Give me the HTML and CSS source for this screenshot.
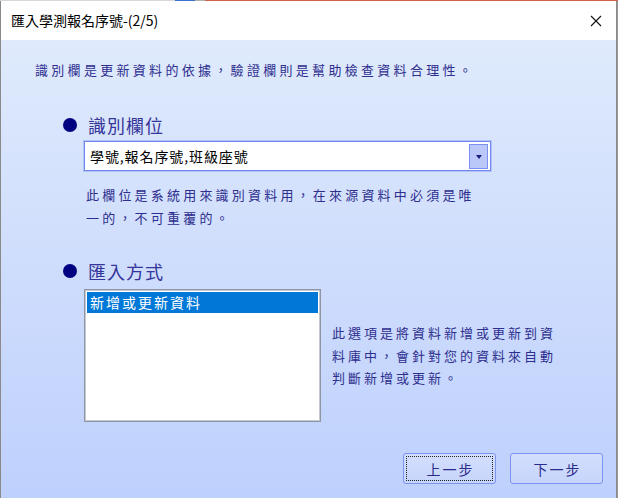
FILE: index.html
```html
<!DOCTYPE html>
<html lang="zh-Hant">
<head>
    <meta charset="UTF-8">
    <title>匯入學測報名序號-(2/5)</title>
    <link rel="stylesheet" href="styles.css">
</head>
<body>
    <div class="behind"></div>
    <div class="window">
        <div class="titlebar">
            <span class="title">匯入學測報名序號-(2/5)</span>
            <svg class="close" width="12" height="12" viewBox="0 0 12 12">
                <path d="M1 1 L11 11 M11 1 L1 11" stroke="#111" stroke-width="1.1" fill="none"/>
            </svg>
        </div>

        <div class="client">
            <p class="intro">識別欄是更新資料的依據，驗證欄則是幫助檢查資料合理性。</p>

            <div class="section">
                <h3 class="heading"><span class="dot"></span>識別欄位</h3>
                <div class="combo">
                    <span class="combo-text">學號,報名序號,班級座號</span>
                    <span class="combo-btn"><span class="arrow"></span></span>
                </div>
                <p class="desc">此欄位是系統用來識別資料用，在來源資料中必須是唯<br>一的，不可重覆的。</p>
            </div>

            <div class="section second">
                <h3 class="heading"><span class="dot"></span>匯入方式</h3>
                <div class="mode-row">
                    <div class="listbox">
                        <div class="list-item selected">新增或更新資料</div>
                    </div>
                    <p class="side-desc">此選項是將資料新增或更新到資<br>料庫中，會針對您的資料來自動<br>判斷新增或更新。</p>
                </div>
            </div>

            <div class="buttons">
                <button class="btn focused"><span>上一步</span></button>
                <button class="btn"><span>下一步</span></button>
            </div>
        </div>
    </div>
</body>
</html>
```

FILE: styles.css
```css
body {
    margin: 0;
    width: 618px;
    height: 498px;
    overflow: hidden;
    background: #9a9a9a;
    font-family: "Noto Sans CJK TC", "Noto Sans", sans-serif;
}
.behind {
    height: 1px;
    background: linear-gradient(to right, #d8d8d8 0, #d8d8d8 175px, #3c6fd0 175px, #3c6fd0 195px, #b0b0b0 195px, #b0b0b0 205px, #d0644a 205px);
}
.window {
    width: 615px;
    height: 497px;
    border-left: 1px solid #8a8a8a;
    border-right: 1px solid #8a8a8a;
    display: flex;
    flex-direction: column;
}
.titlebar {
    height: 39px;
    background: #ffffff;
    display: flex;
    align-items: center;
    justify-content: space-between;
    padding: 0 14px 0 10px;
    flex-shrink: 0;
}
.title {
    font-size: 14px;
    color: #000;
    margin-top: -1px;
}
.close {
    margin-top: 1px;
}
.client {
    flex: 1;
    background: linear-gradient(to bottom, #dfeafc 0%, #bed0fd 100%);
    padding: 20px 13px 0 34px;
    color: #2e2e8e;
}
.intro {
    margin: 0;
    font-size: 13px;
    line-height: 20px;
    letter-spacing: 3.3px;
}
.section {
    margin-top: 33px;
}
.section.second {
    margin-top: 30px;
}
.heading {
    margin: 0 0 0 28px;
    font-size: 18px;
    font-weight: normal;
    line-height: 24px;
    letter-spacing: 1px;
    display: flex;
    align-items: center;
    color: #34349a;
}
.dot {
    width: 14px;
    height: 14px;
    border-radius: 50%;
    background: #000080;
    margin-right: 11px;
}
.combo {
    margin: 4px 0 0 49px;
    width: 400px;
    height: 28px;
    background: #fff;
    border: 1px solid #7189ee;
    outline: 1px solid #b2c1f7;
    display: flex;
    align-items: center;
    justify-content: space-between;
    padding-left: 5px;
    box-sizing: content-box;
}
.combo-text {
    color: #000;
    font-size: 14px;
    letter-spacing: 0.9px;
}
.combo-btn {
    width: 17px;
    height: 23px;
    margin-right: 2px;
    background: #b9c7f9;
    border: 1px solid #7d8ff0;
    display: flex;
    align-items: center;
    justify-content: center;
}
.arrow {
    width: 0;
    height: 0;
    border-left: 3.5px solid transparent;
    border-right: 3.5px solid transparent;
    border-top: 4px solid #1a1a7a;
    margin-top: 1px;
}
.desc {
    margin: 12px 0 0 51px;
    font-size: 13px;
    line-height: 23px;
    letter-spacing: 3.2px;
}
.mode-row {
    display: flex;
    align-items: flex-start;
    margin: 6px 0 0 49px;
}
.listbox {
    width: 231px;
    height: 127px;
    background: #fff;
    border: 1px solid #8f96a3;
    box-shadow: inset 0 0 0 1px #c4c9d3;
    padding: 2px;
    flex-shrink: 0;
}
.list-item {
    height: 21px;
    line-height: 21px;
    font-size: 14px;
    letter-spacing: 2px;
    padding-left: 3px;
    color: #000;
}
.list-item.selected {
    background: #0078d7;
    color: #fff;
}
.side-desc {
    margin: 33px 0 0 11px;
    font-size: 13px;
    line-height: 22.5px;
    letter-spacing: 3px;
}
.buttons {
    display: flex;
    justify-content: flex-end;
    gap: 14px;
    margin-top: 31px;
}
.btn {
    width: 93px;
    height: 31px;
    border: 1px solid #7c93ef;
    border-radius: 3px;
    background: linear-gradient(to bottom, #d3defc, #c6d5fc);
    font-family: "Noto Sans CJK TC", sans-serif;
    font-size: 14px;
    letter-spacing: 2px;
    color: #2b2b8a;
    padding: 2px;
    display: flex;
}
.btn span {
    flex: 1;
    display: flex;
    align-items: center;
    justify-content: center;
    border: 1px solid transparent;
    padding-left: 2px;
}
.btn.focused span {
    border: 1px dotted #222;
}
```
